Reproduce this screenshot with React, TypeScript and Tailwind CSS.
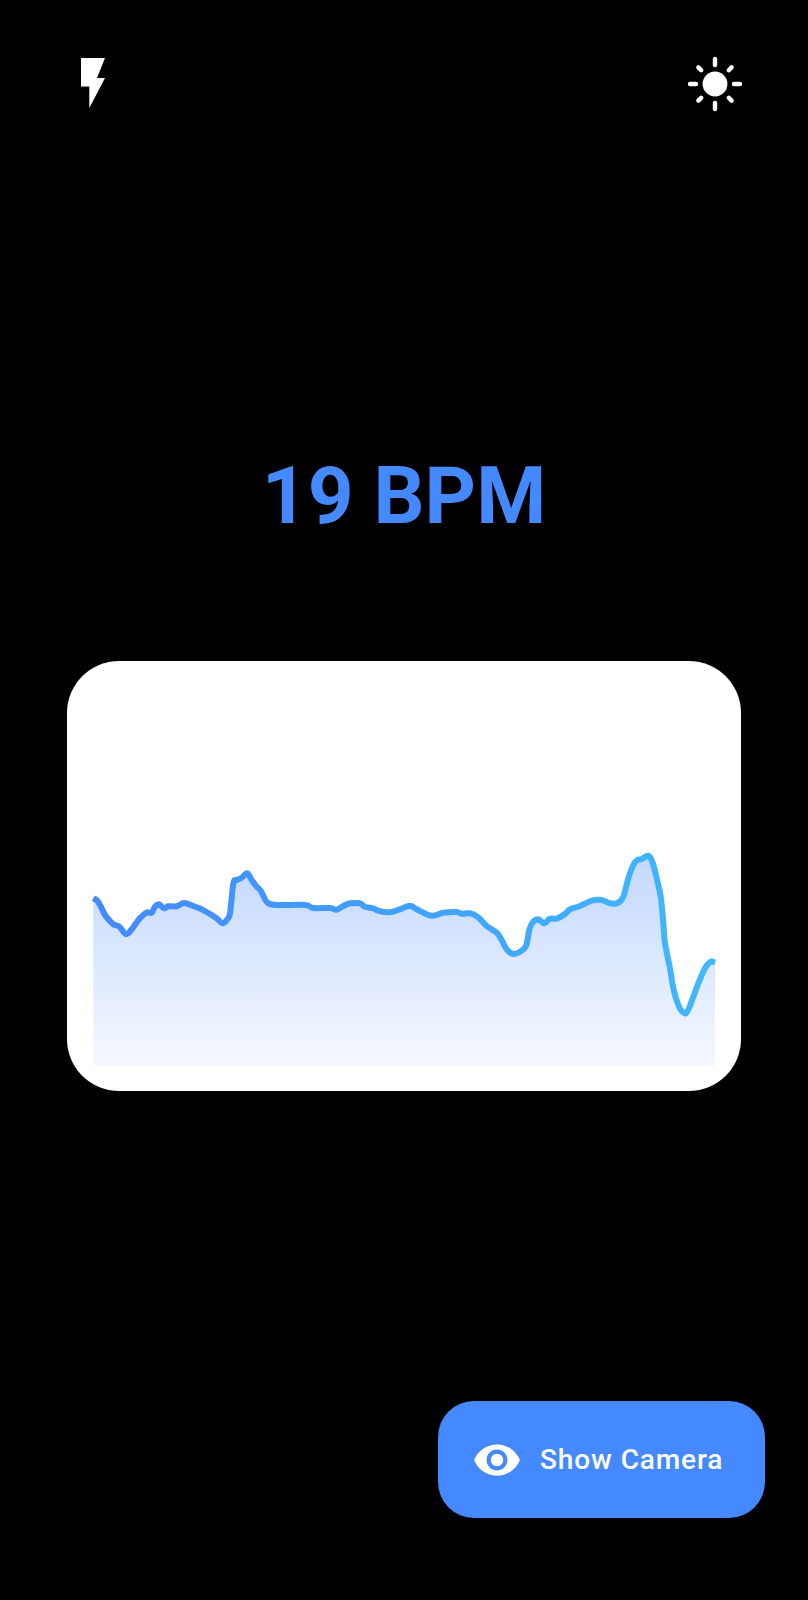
const raw3 = [[100,175],[112,182],[125,205],[135,225],[150,243],[162,254],[178,260],[198,282],[215,268],[235,240],[250,225],[262,217],[275,218],[285,200],[297,193],[312,205],[325,199],[350,199],[372,189],[400,198],[425,208],[450,222],[470,235],[488,250],[500,240],[510,220],[520,130],[530,120],[545,113],[562,100],[575,120],[590,140],[602,152],[615,178],[625,190],[650,195],[735,195],[760,204],[810,204],[830,209],[850,198],[870,190],[900,190],[915,200],[940,205],[955,212],[985,217]];
const raw4 = [[0,208],[30,197],[50,208],[95,227],[130,218],[170,216],[185,221],[210,220],[235,232],[260,258],[290,278],[305,300],[320,328],[340,342],[360,335],[378,318],[388,270],[398,247],[415,238],[433,250],[450,236],[470,236],[495,222],[510,208],[540,198],[575,182],[605,180],[630,190],[655,188],[670,170],[685,115],[700,75],[712,60],[725,57],[745,47],[757,65],[770,115],[782,170],[790,250],[795,310],[810,385],[820,445],[835,495],[850,518],[862,515],[880,470],[895,430],[915,385],[932,365],[945,368]];
const pts = [
  ...raw3.map(([x, y]) => [60 + x / 3, 840 + y / 3]),
  ...raw4.map(([x, y]) => [400 + x / 3, 840 + y / 3]),
];
let line = `M${pts[0][0].toFixed(1)} ${pts[0][1].toFixed(1)}`;
for (let i = 0; i < pts.length - 1; i++) {
  const p0 = pts[Math.max(i - 1, 0)];
  const p1 = pts[i];
  const p2 = pts[i + 1];
  const p3 = pts[Math.min(i + 2, pts.length - 1)];
  const c1x = p1[0] + (p2[0] - p0[0]) / 6;
  const c1y = p1[1] + (p2[1] - p0[1]) / 6;
  const c2x = p2[0] - (p3[0] - p1[0]) / 6;
  const c2y = p2[1] - (p3[1] - p1[1]) / 6;
  line += ` C${c1x.toFixed(1)} ${c1y.toFixed(1)} ${c2x.toFixed(1)} ${c2y.toFixed(1)} ${p2[0].toFixed(1)} ${p2[1].toFixed(1)}`;
}
const area = `${line} L715 1066 L93.3 1066 Z`;

function Flash() {
  return (
    <svg width="26" height="52" viewBox="0 0 26 52" className="block">
      <polygon points="0,0 24,0 16,20 24,20 8.3,50 8.3,28.4 0,28.4" fill="#fff" />
    </svg>
  );
}

function Sun() {
  const rays = [0, 45, 90, 135, 180, 225, 270, 315];
  return (
    <svg width="56" height="56" viewBox="-28 -28 56 56" className="block">
      <circle r="12.4" fill="#fff" />
      {rays.map((a) => (
        <line
          key={a}
          x1="0"
          y1={a % 90 === 0 ? -19 : -19.5}
          x2="0"
          y2={a % 90 === 0 ? -25 : -23.5}
          stroke="#fff"
          strokeWidth="4.4"
          strokeLinecap="round"
          transform={`rotate(${a})`}
        />
      ))}
    </svg>
  );
}

function Eye() {
  return (
    <svg width="50" height="50" viewBox="0 0 24 24" fill="#fff" className="block">
      <path d="M12 4.5C7 4.5 2.73 7.61 1 12c1.73 4.39 6 7.5 11 7.5s9.27-3.11 11-7.5c-1.73-4.39-6-7.5-11-7.5zM12 17c-2.76 0-5-2.24-5-5s2.24-5 5-5 5 2.24 5 5-2.24 5-5 5zm0-8c-1.66 0-3 1.34-3 3s1.34 3 3 3 3-1.34 3-3-1.34-3-3-3z" />
    </svg>
  );
}

export default function App() {
  return (
    <div className="w-[808px] h-[1600px] bg-black flex flex-col overflow-hidden font-['Roboto',sans-serif]">
      <div className="flex justify-between items-start pt-[56px] pl-[81px] pr-[65px]">
        <div className="pt-[2px]"><Flash /></div>
        <Sun />
      </div>
      <div className="mt-[338px] h-[92px] flex items-center justify-center">
        <span className="font-bold text-[80px] leading-none text-[#4489ff]">19 BPM</span>
      </div>
      <div className="mt-[119px] ml-[67px] w-[674px] h-[430px] bg-white rounded-[52px] overflow-hidden">
        <svg viewBox="67 661 674 430" className="block w-full h-full">
          <defs>
            <linearGradient id="fillG" gradientUnits="userSpaceOnUse" x1="0" y1="855" x2="0" y2="1066">
              <stop offset="0" stopColor="#c2d8fd" />
              <stop offset="1" stopColor="#f5f8ff" />
            </linearGradient>
            <linearGradient id="lineG" gradientUnits="userSpaceOnUse" x1="93" y1="0" x2="715" y2="0">
              <stop offset="0" stopColor="#4489ff" />
              <stop offset="1" stopColor="#40b8ff" />
            </linearGradient>
          </defs>
          <path d={area} fill="url(#fillG)" />
          <path d={line} fill="none" stroke="url(#lineG)" strokeWidth="6" strokeLinejoin="round" strokeLinecap="butt" />
        </svg>
      </div>
      <div className="flex justify-end mt-[310px] pr-[43px]">
        <div className="w-[327px] h-[117px] rounded-[36px] bg-[#4489ff] flex items-center pl-[34px] gap-[18px]">
          <Eye />
          <span className="text-white text-[28px] font-medium leading-none tracking-[0.9px]">Show Camera</span>
        </div>
      </div>
    </div>
  );
}
